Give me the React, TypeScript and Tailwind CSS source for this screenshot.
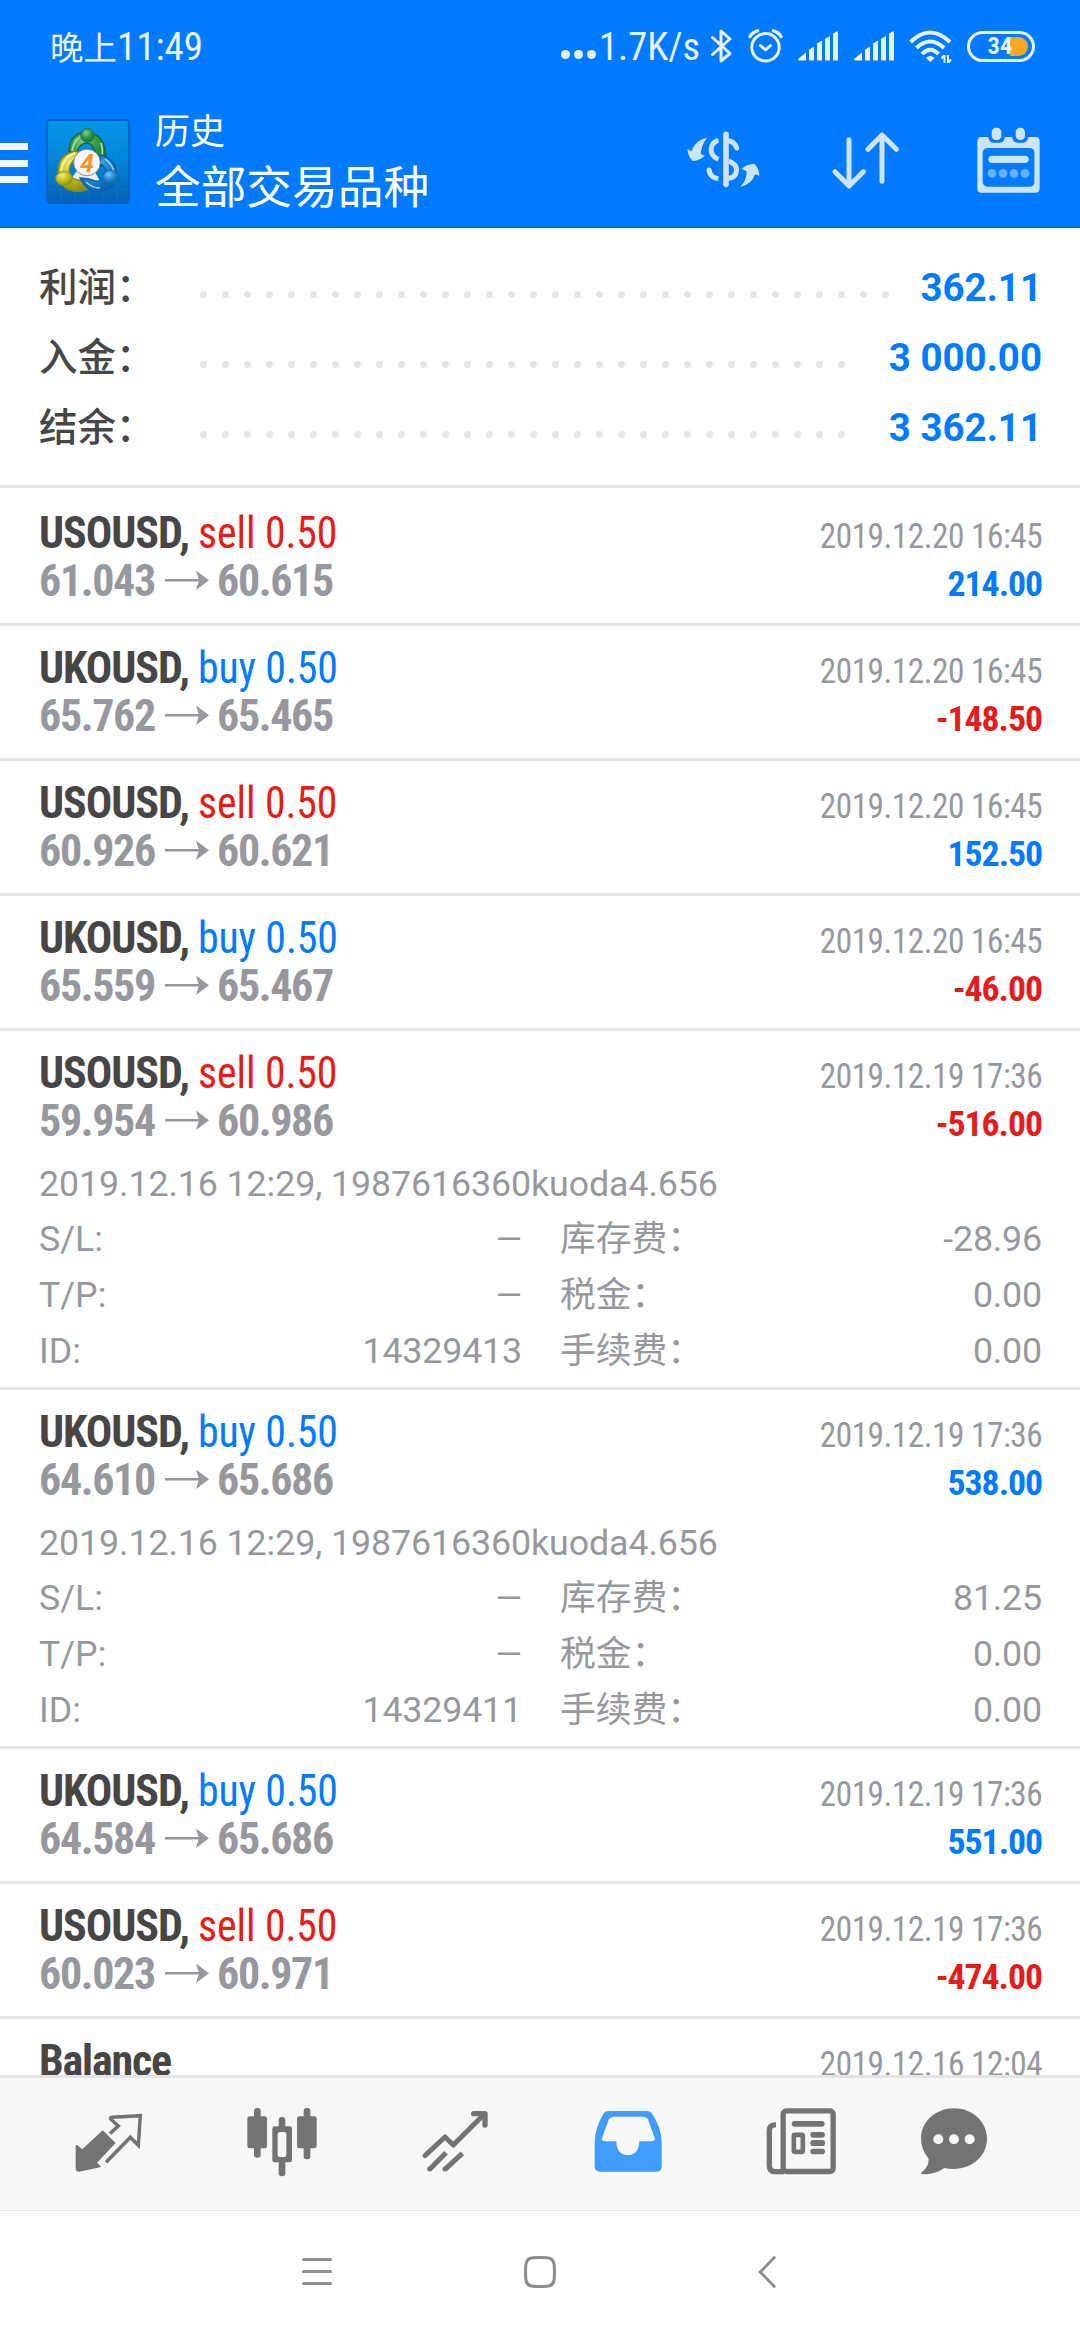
import type { ReactNode } from "react";

const summary = [
  { label: "利润：", value: "362.11", dots: 32 },
  { label: "入金：", value: "3 000.00", dots: 30 },
  { label: "结余：", value: "3 362.11", dots: 30 },
];

type Details = { opened: string; id: string; swap: string };
type Deal = {
  symbol: string;
  side: "sell" | "buy";
  from: string;
  to: string;
  time: string;
  profit: string;
  details?: Details;
};

const deals: Deal[] = [
  { symbol: "USOUSD", side: "sell", from: "61.043", to: "60.615", time: "2019.12.20 16:45", profit: "214.00" },
  { symbol: "UKOUSD", side: "buy", from: "65.762", to: "65.465", time: "2019.12.20 16:45", profit: "-148.50" },
  { symbol: "USOUSD", side: "sell", from: "60.926", to: "60.621", time: "2019.12.20 16:45", profit: "152.50" },
  { symbol: "UKOUSD", side: "buy", from: "65.559", to: "65.467", time: "2019.12.20 16:45", profit: "-46.00" },
  {
    symbol: "USOUSD", side: "sell", from: "59.954", to: "60.986", time: "2019.12.19 17:36", profit: "-516.00",
    details: { opened: "2019.12.16 12:29, 1987616360kuoda4.656", id: "14329413", swap: "-28.96" },
  },
  {
    symbol: "UKOUSD", side: "buy", from: "64.610", to: "65.686", time: "2019.12.19 17:36", profit: "538.00",
    details: { opened: "2019.12.16 12:29, 1987616360kuoda4.656", id: "14329411", swap: "81.25" },
  },
  { symbol: "UKOUSD", side: "buy", from: "64.584", to: "65.686", time: "2019.12.19 17:36", profit: "551.00" },
  { symbol: "USOUSD", side: "sell", from: "60.023", to: "60.971", time: "2019.12.19 17:36", profit: "-474.00" },
];

function SignalBars() {
  return (
    <svg className="h-[30px] w-[40px]" viewBox="0 0 40 30" fill="#e6f2ff">
      <path d="M0 29.5v-1.5l8-6.5v8z" />
      <path d="M11 18.5l5-2.7v13.7h-5z" />
      <path d="M19 12.5l5-3v20h-5z" />
      <path d="M27 8l5-3v24.500h-5z" />
      <path d="M35 2.500l5-2.500v29.500h-5z" />
    </svg>
  );
}

function StatusBar() {
  return (
    <div className="flex h-[92px] items-center pt-[2px] pr-[45px] pl-[50px] text-[#e6f2ff]">
      <div className="flex items-baseline whitespace-nowrap">
        <span className="font-['Noto_Sans_CJK_SC',sans-serif] text-[33.5px]">晚上</span>
        <span className="text-[39px] font-stretch-[86%]">11:49</span>
      </div>
      <div className="ml-auto flex items-center">
        <div className="mt-[15px] flex gap-1">
          <span className="size-[9px] rounded-full bg-[#e6f2ff]" />
          <span className="size-[9px] rounded-full bg-[#e6f2ff]" />
          <span className="size-[9px] rounded-full bg-[#e6f2ff]" />
        </div>
        <div className="ml-[3px] w-[105px] text-[38.5px] leading-[48px] font-stretch-[84%]">1.7K/s</div>
        <svg className="mt-[-3px] ml-[7px] h-[34px] w-[21px]" viewBox="0 0 21 34" fill="none" stroke="#e6f2ff" strokeWidth="3" strokeLinejoin="round" strokeLinecap="round">
          <path d="M1.500 8.500L19 24.500L10 32V2l9 8L1.500 25.500" />
        </svg>
        <svg className="mt-[-3px] ml-[16px] h-[34px] w-[35px]" viewBox="0 0 35 34" fill="none" stroke="#e6f2ff" strokeWidth="3" strokeLinecap="round" strokeLinejoin="round">
          <circle cx="17.500" cy="18.300" r="13.700" />
          <path d="M12.500 16.500l5 4.500 5-4.500" />
          <path d="M2 7.500Q4 3.500 9.500 1.800M33 7.500Q31 3.500 25.500 1.800" strokeWidth="3.400" />
        </svg>
        <div className="mt-[-3px] ml-[15px] flex gap-[16px]">
          <SignalBars />
          <SignalBars />
        </div>
        <svg className="ml-[15px] h-[34px] w-[43px]" viewBox="0 0 43 34" fill="none" stroke="#e6f2ff" strokeWidth="4">
          <path d="M1.500 12Q21 -7 41 12" />
          <path d="M7.500 18Q21 5 35 18" />
          <path d="M13 24Q21 15.500 29.500 24" />
          <path d="M17 28q4-4 8.500 0l-4.200 4z" fill="#e6f2ff" stroke="none" />
          <path d="M35.500 25v8M39 25v8M35 25.500l-2.500 3M39.500 32.500l2.500-3" strokeWidth="2" />
        </svg>
        <div className="mt-[-2px] ml-[15px] flex h-[31px] w-[68px] items-center rounded-full border-[3px] border-[#e6f2ff]">
          <span className="relative z-10 ml-[17.5px] text-[24.5px] leading-none font-bold font-stretch-[85%]">34</span>
          <span className="ml-[-2px] h-[19px] w-[18px] rounded-r-full bg-[#f7a823]" />
        </div>
      </div>
    </div>
  );
}

function AppLogo() {
  return (
    <svg className="h-[85px] w-[84px]" viewBox="0 0 84 85">
      <defs>
        <linearGradient id="tile" x1="0" y1="0" x2="0" y2="1">
          <stop offset="0" stopColor="#0596ea" />
          <stop offset="0.5" stopColor="#0383d6" />
          <stop offset="1" stopColor="#0560b4" />
        </linearGradient>
        <radialGradient id="leaf" cx="0.4" cy="0.3" r="0.7">
          <stop offset="0" stopColor="#8fd090" />
          <stop offset="0.5" stopColor="#2f9a48" />
          <stop offset="1" stopColor="#147436" />
        </radialGradient>
        <radialGradient id="sun" cx="0.4" cy="0.3" r="0.7">
          <stop offset="0" stopColor="#f0ec7a" />
          <stop offset="0.5" stopColor="#c9c222" />
          <stop offset="1" stopColor="#8f9016" />
        </radialGradient>
        <radialGradient id="sea" cx="0.4" cy="0.3" r="0.7">
          <stop offset="0" stopColor="#7cc6f2" />
          <stop offset="0.5" stopColor="#2289d0" />
          <stop offset="1" stopColor="#0a5ca8" />
        </radialGradient>
      </defs>
      <rect x="1" y="1" width="82" height="83" rx="3.500" fill="url(#tile)" stroke="#0562c4" strokeWidth="1.800" />
      <path d="M15 2v81M29 2v81M43 2v81M57 2v81M71 2v81M2 15h80M2 29h80M2 43h80M2 57h80M2 71h80" stroke="#36a6ec" strokeOpacity="0.2" fill="none" />
      <path d="M41 38L25 60l30 4z" fill="#e8f2ea" />
      <path d="M23 33Q23 14 41 13Q59 15 60 38Q59 47 52 48L49 32Q46 24 41 24Q34 24 31 33Z" fill="url(#leaf)" stroke="#166b35" strokeWidth="1.400" />
      <path d="M26 32Q28 19 38 16M55 24Q57 30 56 38" stroke="#a8dfa0" strokeWidth="1.800" fill="none" />
      <path d="M12 52Q13 35 30 32L37 36Q24 40 23 52Q24 60 32 61Q39 61 44 69Q36 74 27 72Q17 70 13 61Z" fill="url(#sun)" stroke="#84881a" strokeWidth="1.400" />
      <path d="M15 52Q17 38 29 34" stroke="#f6f3a4" strokeWidth="2" fill="none" />
      <path d="M55 36Q70 40 71 57Q69 71 52 73Q40 72 34 59Q42 59 49 62Q59 63 61 55Q61 49 54 44Z" fill="url(#sea)" stroke="#0b5fae" strokeWidth="1.400" />
      <path d="M59 40Q67 45 68 54M40 63Q46 69 54 69" stroke="#8ad0f6" strokeWidth="1.600" fill="none" />
      <circle cx="41.500" cy="16.500" r="6.800" fill="url(#leaf)" stroke="#1b7a3b" strokeWidth="1" />
      <ellipse cx="18" cy="59.500" rx="8.300" ry="7" fill="url(#sun)" stroke="#8f9220" strokeWidth="0.800" />
      <ellipse cx="64.500" cy="58.500" rx="8" ry="7.200" fill="url(#sea)" stroke="#0b66b8" strokeWidth="0.800" />
      <circle cx="41" cy="43.500" r="13.300" fill="#f6f4f8" stroke="#6b7f7a" strokeWidth="0.800" />
      <text x="41" y="52.500" textAnchor="middle" fontFamily="Roboto, sans-serif" fontStyle="italic" fontWeight="700" fontSize="25" fill="#f79226">4</text>
    </svg>
  );
}

function TitleBar() {
  return (
    <div className="flex h-[136px] items-center border-b-2 border-[#006fe6] pt-[2px] pr-[40px]">
      <div className="mt-[6px] flex flex-col gap-[9.5px]">
        <span className="h-[7px] w-[27.5px] bg-[#f0f7ff]" />
        <span className="h-[7px] w-[27.5px] bg-[#f0f7ff]" />
        <span className="h-[7px] w-[27.5px] bg-[#f0f7ff]" />
      </div>
      <div className="mt-[2px] ml-[18.5px]">
        <AppLogo />
      </div>
      <div className="ml-[25px] font-['Noto_Sans_CJK_SC',sans-serif] text-white">
        <div className="text-[35px] leading-[42px]">历史</div>
        <div className="mt-[7px] text-[45.7px] leading-[55px]">全部交易品种</div>
      </div>
      <div className="ml-auto flex items-center">
        <svg className="h-[70px] w-[73px]" viewBox="17 18 219 210" fill="none" stroke="#cce4ff" strokeWidth="15">
          <path d="M134 46v150" strokeWidth="17" strokeLinecap="round" />
          <path d="M111 64Q90 70 89 92Q90 112 111 121" />
          <path d="M83 153Q86 176 111 179" />
          <path d="M83 153v0.100" strokeLinecap="round" />
          <path d="M142 65Q160 68 166 87" strokeLinecap="round" />
          <path d="M142 126Q166 136 166 153Q164 176 142 178" />
          <path d="M77 57Q54 60 40 78Q32 88 31 97L18 90Q19 110 34 126Q52 126 71 110L58 105Q60 78 77 57z" fill="#cce4ff" stroke="none" />
          <path d="M177 204Q196 184 196 157L181 150Q196 134 220 135Q234 150 234 171L221 166Q212 196 177 204z" fill="#cce4ff" stroke="none" />
        </svg>
        <svg className="ml-[72.500px] h-[70px] w-[68px]" viewBox="454 18 204 210" fill="none" stroke="#cce4ff" strokeWidth="15" strokeLinecap="round" strokeLinejoin="round">
          <path d="M505 62v138M463 158l42 43 43-43M604 187V49M562 91l42-43 43 43" />
        </svg>
        <svg className="ml-[77px] h-[70px] w-[63px]" viewBox="890 18 189 210">
          <path fillRule="evenodd" fill="#cce4ff" d="M902 54H924Q926 70 938 71H960Q972 68 974 54H995Q998 70 1010 71H1030Q1042 68 1044 54H1067Q1078 55 1078 66V209Q1077 221 1066 221H903Q891 220 891 209V66Q892 55 902 54ZM922 87Q908 88 907 101V188Q908 201 921 203H1049Q1062 202 1062 189V100Q1061 88 1048 87Z" />
          <rect x="934" y="26" width="29" height="37" rx="13" fill="#cce4ff" />
          <rect x="1006" y="26" width="28" height="37" rx="13" fill="#cce4ff" />
          <rect x="924" y="110" width="121" height="22" rx="11" fill="#cce4ff" />
          <g fill="#66b0ff">
            <circle cx="935" cy="163" r="13" />
            <circle cx="968" cy="163" r="13" />
            <circle cx="1001" cy="163" r="13" />
            <circle cx="1034" cy="163" r="13" />
          </g>
        </svg>
      </div>
    </div>
  );
}

function Summary() {
  return (
    <div className="h-[260px] border-b-[3px] border-[#e4e4e4] pt-[24.5px] pr-[38px] pl-[39px]">
      {summary.map((row) => (
        <div key={row.label} className="flex h-[70px] text-[38.5px] leading-[70px]">
          <div className="w-[161px] font-medium text-[#464646]">{row.label}</div>
          <div className="mt-[38.500px] flex gap-[15px]">
            {Array.from({ length: row.dots }, (_, i) => (
              <span key={i} className="size-[7px] rounded-full bg-[#e5e5e5]" />
            ))}
          </div>
          <div className="ml-auto font-bold text-[#007aff]">{row.value}</div>
        </div>
      ))}
    </div>
  );
}

function DetailCell({ label, value }: { label: string; value?: string }) {
  return (
    <div className="flex justify-between">
      <span>{label}</span>
      {value ? (
        <span className="tracking-[-0.15px]">{value}</span>
      ) : (
        <span className="origin-right scale-x-[0.94]">—</span>
      )}
    </div>
  );
}

function DealTime({ children }: { children: ReactNode }) {
  return (
    <div className="origin-right scale-x-[0.93] text-[35.75px] tracking-[-0.5px] text-[#97989d]">{children}</div>
  );
}

function DealRow({ deal }: { deal: Deal }) {
  const tone = deal.side === "sell" ? "text-[#e51c1c]" : "text-[#007aff]";
  const profitTone = deal.profit.startsWith("-") ? "text-[#e51c1c]" : "text-[#007aff]";
  return (
    <div
      className={
        deal.details
          ? "h-[359px] border-b-[3px] border-[#e4e4e4] pt-[18px] pr-[38px] pl-[39px]"
          : "h-[135px] border-b-[3px] border-[#e4e4e4] pt-[18px] pr-[38px] pl-[39px]"
      }
    >
      <div className="flex h-[48px] items-baseline justify-between leading-[48px] font-stretch-condensed">
        <div className="flex items-baseline text-[44px]">
          <span className="font-bold tracking-[-1.05px] text-[#464646]">{deal.symbol},</span>
          <span className={`ml-[9.5px] origin-left scale-x-[0.95] tracking-[-0.12px] ${tone}`}>{deal.side} 0.50</span>
        </div>
        <DealTime>{deal.time}</DealTime>
      </div>
      <div className="flex h-[48px] items-baseline justify-between leading-[48px] font-bold font-stretch-condensed">
        <div className="flex items-baseline text-[44px] tracking-[-1.35px] text-[#97989d]">
          <span className="w-[117px]">{deal.from}</span>
          <svg className="mr-[8px] ml-[9px] h-[26px] w-[44px]" viewBox="0 0 44 26">
            <path d="M0 9h36v2.600H0z" fill="#97989d" />
            <path d="M31 0.500L44 10.300L31 20l3-9.700z" fill="#97989d" />
          </svg>
          <span>{deal.to}</span>
        </div>
        <div className={`text-[35.75px] tracking-[-1.05px] ${profitTone}`}>{deal.profit}</div>
      </div>
      {deal.details && (
        <div className="mt-[11.5px] mr-[-1px] text-[35.75px] leading-[55.700px] text-[#97989d]">
          <div className="tracking-[-0.08px]">{deal.details.opened}</div>
          <div className="grid grid-cols-[483px_482px] gap-x-[38px]">
            <DetailCell label="S/L:" />
            <DetailCell label="库存费：" value={deal.details.swap} />
            <DetailCell label="T/P:" />
            <DetailCell label="税金：" value="0.00" />
            <DetailCell label="ID:" value={deal.details.id} />
            <DetailCell label="手续费：" value="0.00" />
          </div>
        </div>
      )}
    </div>
  );
}

function Tab({ last, children }: { last?: boolean; children: ReactNode }) {
  return <div className={last ? "flex w-[133px] justify-center" : "flex w-[173px] justify-center"}>{children}</div>;
}

function TabBar() {
  return (
    <div className="flex h-[136px] items-center border-t-[3px] border-b border-[#e4e4e4] bg-[#f7f7f7] pb-[5px] pl-[22px]">
      <Tab>
        <svg className="size-[70px]" viewBox="41 35 210 210">
          <path d="M127 105L166 143L110 202L123 215L56 229Q47 229 46 220V150Q50 147 53 151L66 162Z" fill="#737373" />
          <path d="M153 111L174 92L151 71Q149 67 155 66L240 61L234 150L210 126L141 197" fill="none" stroke="#737373" strokeWidth="10.500" strokeLinecap="square" />
        </svg>
      </Tab>
      <Tab>
        <svg className="size-[70px]" viewBox="558 35 210 210">
          <g fill="#737373">
            <rect x="579" y="38" width="20" height="149" rx="9" />
            <rect x="559" y="63" width="59" height="96" rx="7" />
            <rect x="728" y="38" width="20" height="154" rx="9" />
            <rect x="708" y="63" width="59" height="96" rx="7" />
            <rect x="653" y="65" width="20" height="178" rx="9" />
            <rect x="634" y="93" width="59" height="108" rx="7" />
          </g>
          <rect x="650" y="110" width="26" height="75" rx="7" fill="#f7f7f7" />
        </svg>
      </Tab>
      <Tab>
        <svg className="size-[70px]" viewBox="1077 35 210 210" fill="none" stroke="#737373" strokeWidth="15" strokeLinejoin="round">
          <path d="M1092 181L1152 125L1177 149L1268 58" strokeLinecap="round" />
          <path d="M1238 55h34v34" strokeLinecap="round" strokeWidth="16" />
          <path d="M1106 222L1155 172M1152 222L1204 174" />
          <path d="M1106 221v0.100M1152 221v0.100" strokeLinecap="round" />
        </svg>
      </Tab>
      <Tab>
        <svg className="size-[70px]" viewBox="37 35 210 210">
          <path fillRule="evenodd" fill="#409cff" d="M84 47H199Q208 47 213 54Q242 95 243 140V215Q242 228 229 229H57Q43 228 42 215V140Q44 95 69 54Q75 47 84 47ZM99 64Q89 64 85 72L64 128Q62 137 71 138H107Q108 179 142 180Q175 178 176 138H214Q224 137 222 129L202 72Q197 64 188 64Z" />
        </svg>
      </Tab>
      <Tab>
        <svg className="size-[70px]" viewBox="558 35 210 210">
          <g fill="none" stroke="#737373" strokeWidth="16">
            <rect x="609.500" y="46.500" width="150" height="182" rx="10" />
            <path d="M588 88Q568 89 568 105V212Q569 229 586 229H612" />
            <rect x="641.500" y="118.500" width="27" height="51" rx="3" strokeWidth="14" />
          </g>
          <g fill="#737373">
            <rect x="635" y="77" width="99" height="17" rx="8.500" />
            <rect x="691" y="110" width="44" height="17" rx="8.500" />
            <rect x="691" y="134" width="44" height="18" rx="8.500" />
            <rect x="691" y="160" width="44" height="17" rx="8.500" />
          </g>
        </svg>
      </Tab>
      <Tab last>
        <svg className="size-[70px]" viewBox="1014 35 210 210">
          <path d="M1119 39C1175 39 1218 80 1218 130S1175 220 1119 221Q1103 221 1090 218Q1062 238 1024 237Q1018 234 1023 230Q1044 214 1043 190Q1020 162 1020 130C1020 80 1063 39 1119 39Z" fill="#737373" />
          <g fill="#f7f7f7">
            <circle cx="1072" cy="132" r="15" />
            <circle cx="1119" cy="132" r="15" />
            <circle cx="1166" cy="132" r="15" />
          </g>
        </svg>
      </Tab>
    </div>
  );
}

function NavBar() {
  return (
    <div className="flex h-[129px] items-center bg-white pb-[8px]">
      <div className="ml-[302px] flex w-[30px] flex-col gap-[9px]">
        <span className="h-[3px] rounded-full bg-[#8f8f8f]" />
        <span className="h-[3px] rounded-full bg-[#8f8f8f]" />
        <span className="h-[3px] rounded-full bg-[#8f8f8f]" />
      </div>
      <svg className="ml-[192px] h-[32px] w-[32px]" viewBox="0 0 32 32" fill="none" stroke="#8c8c8c" strokeWidth="3">
        <path d="M9 1.700Q16 1.300 23 1.700Q29.500 2 30.200 9Q30.700 16 30.200 23Q29.500 30 23 30.300Q16 30.700 9 30.300Q2.500 30 1.800 23Q1.300 16 1.800 9Q2.500 2 9 1.700Z" />
      </svg>
      <svg className="ml-[202px] h-[32px] w-[18px]" viewBox="0 0 18 32" fill="none" stroke="#8c8c8c" strokeWidth="2.800" strokeLinecap="round">
        <path d="M16.300 1.500L2.200 16L16.300 30.500" />
      </svg>
    </div>
  );
}

export default function App() {
  return (
    <div className="flex h-[2340px] w-[1080px] flex-col overflow-hidden bg-white font-[Roboto,'Noto_Sans_CJK_SC',sans-serif]">
      <header className="h-[228px] shrink-0 bg-[#007aff]">
        <StatusBar />
        <TitleBar />
      </header>
      <main className="h-[1847px] shrink-0 overflow-hidden">
        <Summary />
        <div className="pt-[3px]">
          {deals.map((deal, i) => (
            <DealRow key={i} deal={deal} />
          ))}
          <div className="flex items-baseline justify-between pt-[18px] pr-[38px] pl-[39px] leading-[48px] font-stretch-condensed">
            <span className="text-[44px] font-bold tracking-[-1.2px] text-[#464646]">Balance</span>
            <DealTime>2019.12.16 12:04</DealTime>
          </div>
        </div>
      </main>
      <TabBar />
      <NavBar />
    </div>
  );
}
